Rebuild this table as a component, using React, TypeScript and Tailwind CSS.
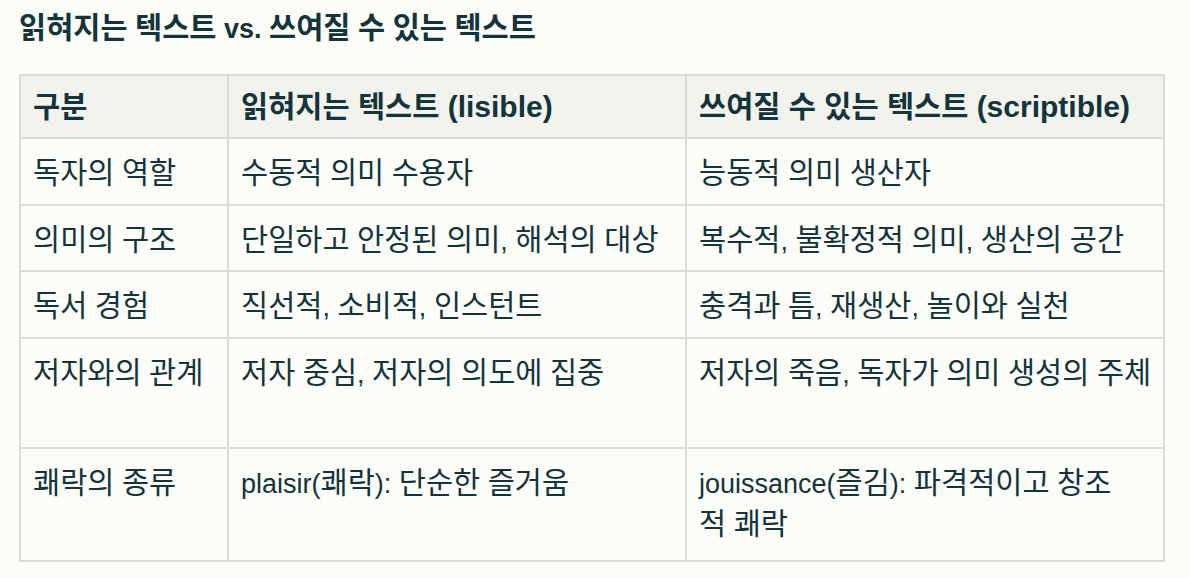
import { Fragment } from "react"

const rows = [
  { h: "h-[65px]", a: "독자의 역할", b: "수동적 의미 수용자", c: "능동적 의미 생산자" },
  { h: "h-[64px]", a: "의미의 구조", b: "단일하고 안정된 의미, 해석의 대상", c: "복수적, 불확정적 의미, 생산의 공간" },
  { h: "h-[65px]", a: "독서 경험", b: "직선적, 소비적, 인스턴트", c: "충격과 틈, 재생산, 놀이와 실천" },
  { h: "h-[108px]", a: "저자와의 관계", b: "저자 중심, 저자의 의도에 집중", c: "저자의 죽음, 독자가 의미 생성의 주체" },
  { h: "h-[111px]", a: "쾌락의 종류", b: "plaisir(쾌락): 단순한 즐거움", c: "jouissance(즐김): 파격적이고 창조\n적 쾌락" },
]

const font = "font-['Liberation_Sans','Noto_Sans_CJK_KR',sans-serif]"

// hangul in Noto runs narrower than the original font, so bump it a bit
function T({ t }: { t: string }) {
  return (
    <>
      {t.split("\n").map((line, li) => (
        <span key={li} className="block">
          {line.split(/([\uAC00-\uD7A3]+)/).map((p, i) =>
            i % 2 === 1 ? <span key={i} className="text-[29.5px]">{p}</span> : <Fragment key={i}>{p}</Fragment>
          )}
        </span>
      ))}
    </>
  )
}

export default function App() {
  return (
    <div className={`min-h-[578px] bg-[#fcfcf9] text-[#13343b] ${font} pl-[19px] pt-[8px]`}>
      <h1 className="text-[27px] font-bold leading-[40px]"><T t="읽혀지는 텍스트 vs. 쓰여질 수 있는 텍스트" /></h1>

      <div className="mt-[25px] w-[1146px] grid grid-cols-[206px_456px_476px] gap-[2px] p-[2px] bg-[#dcdcd7] text-[27px] leading-[40px]">
        <div className="h-[61px] bg-[#f3f3ee] pl-[12px] pr-[6px] pt-[11px] font-bold text-[30px]"><T t="구분" /></div>
        <div className="h-[61px] bg-[#f3f3ee] pl-[12px] pr-[6px] pt-[11px] font-bold text-[30px]"><T t="읽혀지는 텍스트 (lisible)" /></div>
        <div className="h-[61px] bg-[#f3f3ee] pl-[12px] pr-[6px] pt-[11px] font-bold text-[30px]"><T t="쓰여질 수 있는 텍스트 (scriptible)" /></div>
        {rows.map(r => (
          <Fragment key={r.a}>
            <div className={`${r.h} bg-[#fcfcf9] pl-[12px] pr-[6px] pt-[14px]`}><T t={r.a} /></div>
            <div className={`${r.h} bg-[#fcfcf9] pl-[12px] pr-[6px] pt-[14px]`}><T t={r.b} /></div>
            <div className={`${r.h} bg-[#fcfcf9] pl-[12px] pr-[6px] pt-[14px]`}><T t={r.c} /></div>
          </Fragment>
        ))}
      </div>
    </div>
  )
}
